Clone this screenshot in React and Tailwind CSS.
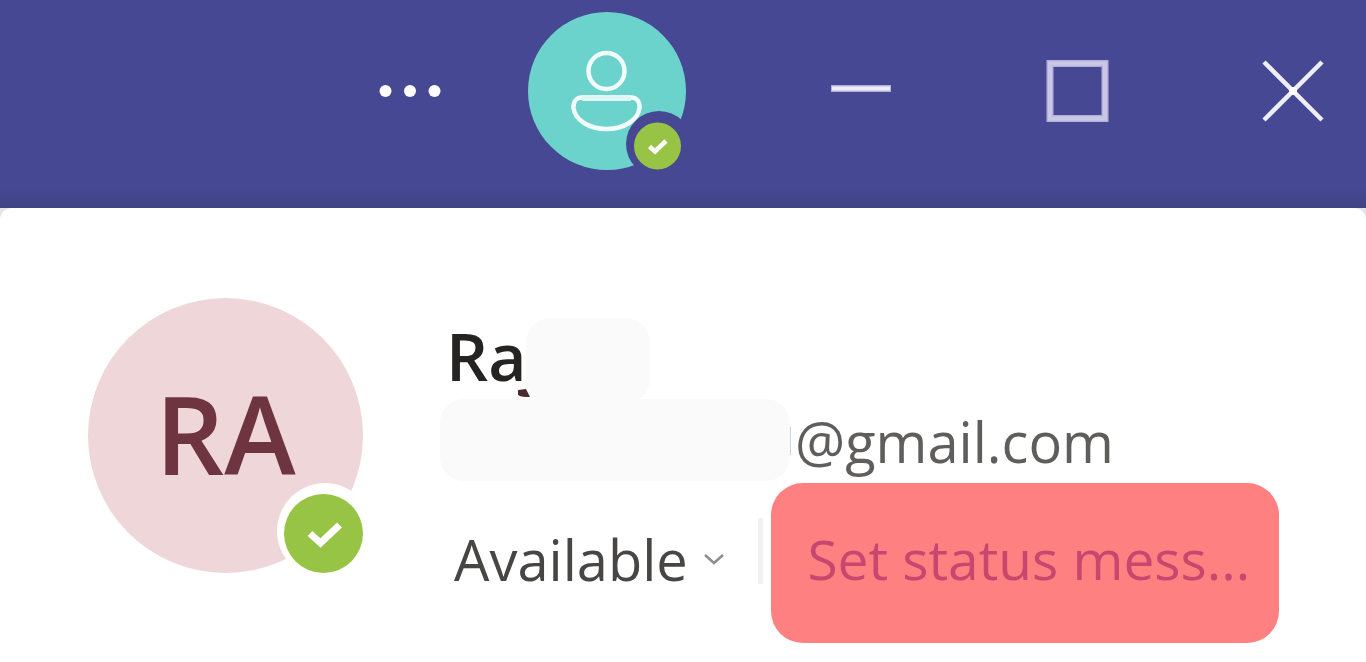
function HeaderAvatar() {
  return (
    <button type="button" aria-label="Account" className="ml-[86px] shrink-0 rounded-full">
      <svg className="block size-[158px]" viewBox="0 0 158 158" fill="none" aria-hidden="true">
        <circle cx="79" cy="79" r="79" fill="#6bd3cc" />
        <g stroke="#f1fcfb" strokeWidth="4.5" strokeLinejoin="round">
          <circle cx="78.5" cy="59" r="18" />
          <path d="M54 85.500H103C109 85.500 112 90 111.500 96C110 108 96 117 78.500 117C61 117 47 108 45.500 96C45 90 48 85.500 54 85.500Z" />
        </g>
        <path d="M54 86H103" stroke="#dff6f4" strokeWidth="6" />
        <circle cx="131" cy="132" r="33" fill="#464893" />
        <circle cx="129.500" cy="134" r="23.500" fill="#98c445" />
        <path d="M121.500 134.500L127 139.500L138 129" stroke="#fff" strokeWidth="4.500" />
      </svg>
    </button>
  );
}

function TitleBar() {
  return (
    <header className="flex h-[208px] items-start justify-end bg-linear-to-b from-[#464893] from-90% to-[#424384] pt-3 pr-[42px]">
      <div className="flex items-center">
        <button type="button" aria-label="More options">
          <svg className="block h-4 w-16" viewBox="0 0 64 16" fill="#fff" aria-hidden="true">
            <circle cx="7.500" cy="8" r="6" />
            <circle cx="32" cy="8" r="6" />
            <circle cx="56.500" cy="8" r="6" />
          </svg>
        </button>
        <HeaderAvatar />
        <div className="ml-[144px] flex items-center gap-[153px]">
          <button type="button" aria-label="Minimize">
            <svg className="block size-[62px]" viewBox="0 0 62 62" aria-hidden="true">
              <path d="M1 28.500H61" stroke="#b4b2da" strokeWidth="7" />
              <path d="M2 28.500H60" stroke="#eeedf8" strokeWidth="4" />
            </svg>
          </button>
          <button type="button" aria-label="Maximize">
            <svg className="block size-[64px]" viewBox="0 0 64 64" fill="none" aria-hidden="true">
              <rect x="5" y="4.500" width="55" height="55" stroke="#b4b2da" strokeWidth="7" />
              <rect x="5" y="4.500" width="55" height="55" stroke="#cac8e6" strokeWidth="4" />
            </svg>
          </button>
          <button type="button" aria-label="Close">
            <svg className="block size-[62px]" viewBox="0 0 62 62" fill="none" aria-hidden="true">
              <path d="M2 2L60 60M60 2L2 60" stroke="#eeedf8" strokeWidth="4.500" />
              <circle cx="31" cy="31" r="4" fill="#fff" />
            </svg>
          </button>
        </div>
      </div>
    </header>
  );
}

function ProfileAvatar() {
  return (
    <div className="relative mt-[90px] flex size-[275px] shrink-0 items-center justify-center rounded-full bg-[#efd6d9]">
      <span className="pb-1 text-[108px] leading-none font-semibold text-[#6e3440]">RA</span>
      <svg className="absolute right-0 bottom-0 size-[96px]" viewBox="0 0 96 96" fill="none" aria-hidden="true">
        <circle cx="58" cy="54" r="48" fill="#fff" />
        <circle cx="56.500" cy="56.500" r="39.500" fill="#98c445" />
        <path d="M43 56.500L53.500 66L72.500 48" stroke="#fff" strokeWidth="7" />
      </svg>
    </div>
  );
}

export default function App() {
  return (
    <div className="flex min-h-screen flex-col overflow-x-hidden bg-[#e4e4ec] font-['Open_Sans','Noto_Sans',sans-serif]">
      <TitleBar />
      <main className="flex grow items-start gap-[77px] rounded-t-xl bg-white pl-[88px]">
        <ProfileAvatar />
        <section className="pt-[110px]">
          <div className="flex h-[81px] items-start pl-[6px]">
            <h1 className="text-[66px] leading-[74px] font-semibold text-[#252423]">Ra</h1>
            <div className="relative h-[85px] w-[124px] rounded-[24px] bg-[#fafafa]">
              <svg className="absolute bottom-[6px] -left-2 h-2 w-3" viewBox="0 0 12 8" aria-hidden="true">
                <path d="M0 1L8 0L12 8C7 8 3 8 0 6Z" fill="#4a2c30" />
              </svg>
            </div>
          </div>
          <div className="flex h-[84px] items-start">
            <div className="h-[82px] w-[350px] rounded-[24px] bg-[#fafafa]" />
            <div className="mt-7 h-7 w-px bg-[#c4d4ea]" />
            <p className="pl-1 text-[56px] leading-[84px] text-[#605e5c]">@gmail.com</p>
          </div>
          <div className="flex h-[160px] items-center">
            <button type="button" className="flex items-center gap-4 pb-2 pl-[14px] text-[56px] leading-[76px] text-[#484644]">
              Available
              <svg className="h-3 w-5" viewBox="0 0 20 12" fill="none" aria-hidden="true">
                <path d="M1 2L10 10L19 2" stroke="#8f8d8b" strokeWidth="2.500" />
              </svg>
            </button>
            <div className="mt-[35px] mr-[8px] ml-[34px] h-[66px] w-[5px] shrink-0 self-start bg-[#f1f1f1]" />
            <button type="button" className="h-[160px] w-[508px] shrink-0 rounded-[32px] bg-[#ff8080] pb-2 pl-2 text-[55px] leading-[76px] whitespace-nowrap text-[#c8476f]">
              Set status mess...
            </button>
          </div>
        </section>
      </main>
    </div>
  );
}
